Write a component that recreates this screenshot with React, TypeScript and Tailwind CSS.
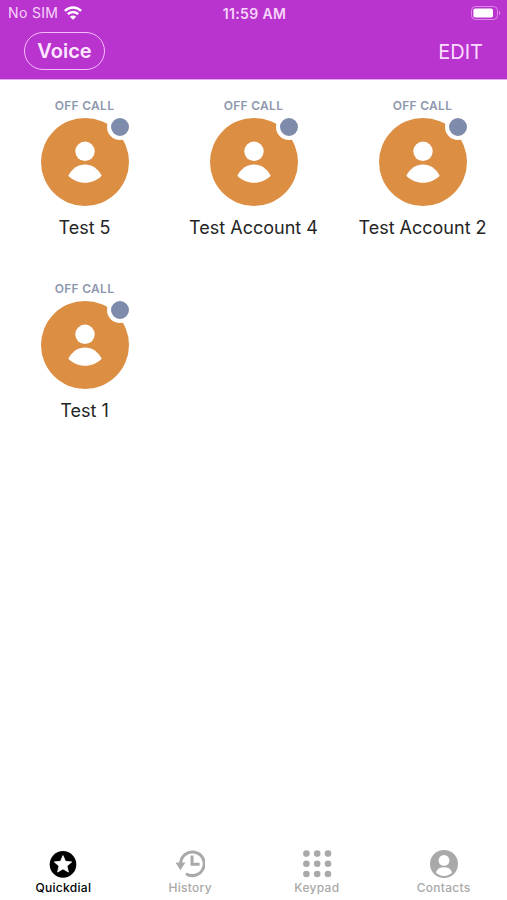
import React from 'react';

interface Contact {
  id: number;
  name: string;
  status: string;
}

interface TabItem {
  label: string;
  icon: React.ReactNode;
}

const CONTACTS: Contact[] = [
  { id: 1, name: 'Test 5', status: 'OFF CALL' },
  { id: 2, name: 'Test Account 4', status: 'OFF CALL' },
  { id: 3, name: 'Test Account 2', status: 'OFF CALL' },
  { id: 4, name: 'Test 1', status: 'OFF CALL' },
];

const WifiIcon = () => (
  <svg width="18" height="14" viewBox="0 0 18 14" fill="none" stroke="currentColor" strokeWidth="2.5" aria-hidden="true">
    <path d="M.8 4.9C5.5.2 12.5.2 17.2 4.9" />
    <path d="M3.8 8.2c3-2.9 7.4-2.9 10.4 0" />
    <path d="M9 13.8 5.8 10.7c1.8-1.6 4.6-1.6 6.4 0Z" fill="currentColor" stroke="none" />
  </svg>
);

const BatteryIcon = () => (
  <svg width="30" height="14" viewBox="0 0 30 14" fill="none" aria-hidden="true">
    <rect x="0.5" y="0.5" width="26" height="13" rx="4" stroke="#dd86e8" />
    <rect x="2.4" y="2.4" width="19.6" height="9.2" rx="1.8" fill="#fff" />
    <path d="M28 4.8c1.8.8 1.8 3.6 0 4.4Z" fill="#dd86e8" />
  </svg>
);

const AvatarIcon = () => (
  <svg viewBox="0 0 88 88" className="size-[88px] rounded-full bg-[#dc8e43]" fill="#fff" aria-hidden="true">
    <circle cx="44" cy="33.3" r="9.7" />
    <path d="M27.3 57.8C31.3 50.5 37.2 46.6 44 46.6s12.7 3.9 16.7 11.2C56 62.5 50.3 64.8 44 64.8s-12-2.3-16.7-7Z" />
  </svg>
);

const StarIcon = () => (
  <svg width="28" height="28" viewBox="0 0 28 28" aria-hidden="true">
    <circle cx="14" cy="14.4" r="13.3" fill="currentColor" />
    <path
      d="m14 5.6 2.5 5.7 6.2.6-4.7 4.1 1.4 6.1-5.4-3.2-5.4 3.2L10 16l-4.7-4.1 6.2-.6Z"
      fill="#fff"
      stroke="#fff"
      strokeWidth="0.8"
      strokeLinejoin="round"
    />
  </svg>
);

const HistoryIcon = () => (
  <svg width="30" height="28" viewBox="0 0 30 28" fill="none" stroke="currentColor" aria-hidden="true">
    <path d="M5.6 13.4A11.8 11.8 0 1 1 11 23.7" strokeWidth="3" />
    <path d="M.6 12.6h9.8L5.4 20.3Z" fill="currentColor" stroke="none" />
    <path d="M17 5.4v8.8h7.6" strokeWidth="3" />
  </svg>
);

const KeypadIcon = () => (
  <svg width="30" height="28" viewBox="0 0 30 28" fill="currentColor" aria-hidden="true">
    {[3.6, 13.8, 24].map((cy) => [4.4, 15.2, 26].map((cx) => <circle key={`${cx}-${cy}`} cx={cx} cy={cy} r="3.3" />))}
  </svg>
);

const ContactsIcon = () => (
  <svg width="28" height="28" viewBox="0 0 28 28" aria-hidden="true">
    <circle cx="14" cy="14" r="14" fill="currentColor" />
    <circle cx="14" cy="10.4" r="5.4" fill="#fff" />
    <path d="M5.8 22.6c1.2-3.6 4.2-5.4 8.2-5.4s7 1.8 8.2 5.4A11.8 11.8 0 0 1 14 26a11.8 11.8 0 0 1-8.2-3.4Z" fill="#fff" />
  </svg>
);

const TABS: TabItem[] = [
  { label: 'Quickdial', icon: <StarIcon /> },
  { label: 'History', icon: <HistoryIcon /> },
  { label: 'Keypad', icon: <KeypadIcon /> },
  { label: 'Contacts', icon: <ContactsIcon /> },
];

const StatusBar = () => (
  <div className="grid h-7 grid-cols-3 items-center pr-1.5 pl-2 text-sm tracking-wide text-[#f7d4fb]">
    <div className="flex items-center gap-1.5 pb-0.5">
      <span>No SIM</span>
      <span className="text-white">
        <WifiIcon />
      </span>
    </div>
    <div className="text-center font-semibold">11:59 AM</div>
    <div className="flex justify-end pb-0.5">
      <BatteryIcon />
    </div>
  </div>
);

const Header = () => (
  <header className="border-b border-[#e6a5ef] bg-[#b934ce]">
    <StatusBar />
    <div className="flex items-start justify-between px-6 pt-1 pb-[7px]">
      <button type="button" className="h-[38px] w-[81px] rounded-full border border-[#f6bdfc] text-xl font-semibold text-[#fde8ff]">
        Voice
      </button>
      <button type="button" className="h-10 text-xl text-[#fbdcff]">
        EDIT
      </button>
    </div>
  </header>
);

const ContactCard = ({ contact }: { contact: Contact }) => (
  <li>
    <button type="button" className="flex w-full flex-col items-center">
      <span className="text-xs leading-4 font-semibold tracking-wide text-[#8e97ae]">{contact.status}</span>
      <span className="relative mt-1">
        <AvatarIcon />
        <span className="absolute -top-1 -right-1 size-[26px] rounded-full border-4 border-white bg-[#7f8bab]" />
      </span>
      <span className="mt-2 text-lg leading-7 whitespace-nowrap text-[#252525]">{contact.name}</span>
    </button>
  </li>
);

const TabBar = () => (
  <nav className="grid grid-cols-4 pb-1">
    {TABS.map(({ label, icon }, index) => (
      <button
        key={label}
        type="button"
        aria-current={index === 0 ? 'page' : undefined}
        className={`flex flex-col items-center gap-0.5 text-xs leading-4 font-medium tracking-wide ${index === 0 ? 'text-black' : 'text-[#a9a9a9]'}`}
      >
        {icon}
        <span>{label}</span>
      </button>
    ))}
  </nav>
);

export default function App() {
  return (
    <div className="flex min-h-screen flex-col bg-white font-[Inter,sans-serif]">
      <Header />
      <main className="flex-1 pt-[18px]">
        <ul className="grid grid-cols-3 gap-y-[39px]">
          {CONTACTS.map((contact) => (
            <ContactCard key={contact.id} contact={contact} />
          ))}
        </ul>
      </main>
      <TabBar />
    </div>
  );
}
